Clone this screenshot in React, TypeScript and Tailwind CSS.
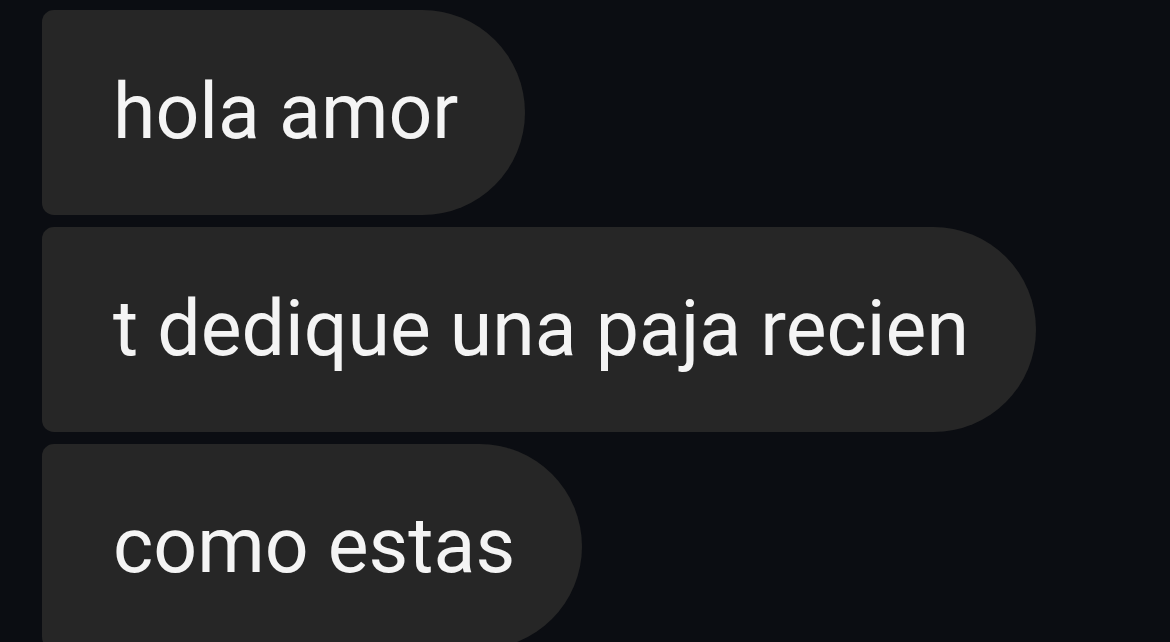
const messages = ['hola amor', 't dedique una paja recien', 'como estas'];

function Bubble({ text }: { text: string }) {
  return (
    <div className="flex h-[205px] w-fit items-center rounded-l-[12px] rounded-r-[103px] bg-[#262626] pl-[71px] pr-[67px]">
      <span className="whitespace-nowrap text-[77px] leading-[1.171] text-[#f4f4f4]">{text}</span>
    </div>
  );
}

export default function App() {
  return (
    <div
      className="h-screen overflow-hidden bg-[#0b0d12]"
      style={{ fontFamily: 'Roboto, "Noto Sans", sans-serif' }}
    >
      <div className="flex flex-col gap-[12px] pl-[42px] pt-[10px]">
        {messages.map((m) => (
          <Bubble key={m} text={m} />
        ))}
      </div>
    </div>
  );
}
